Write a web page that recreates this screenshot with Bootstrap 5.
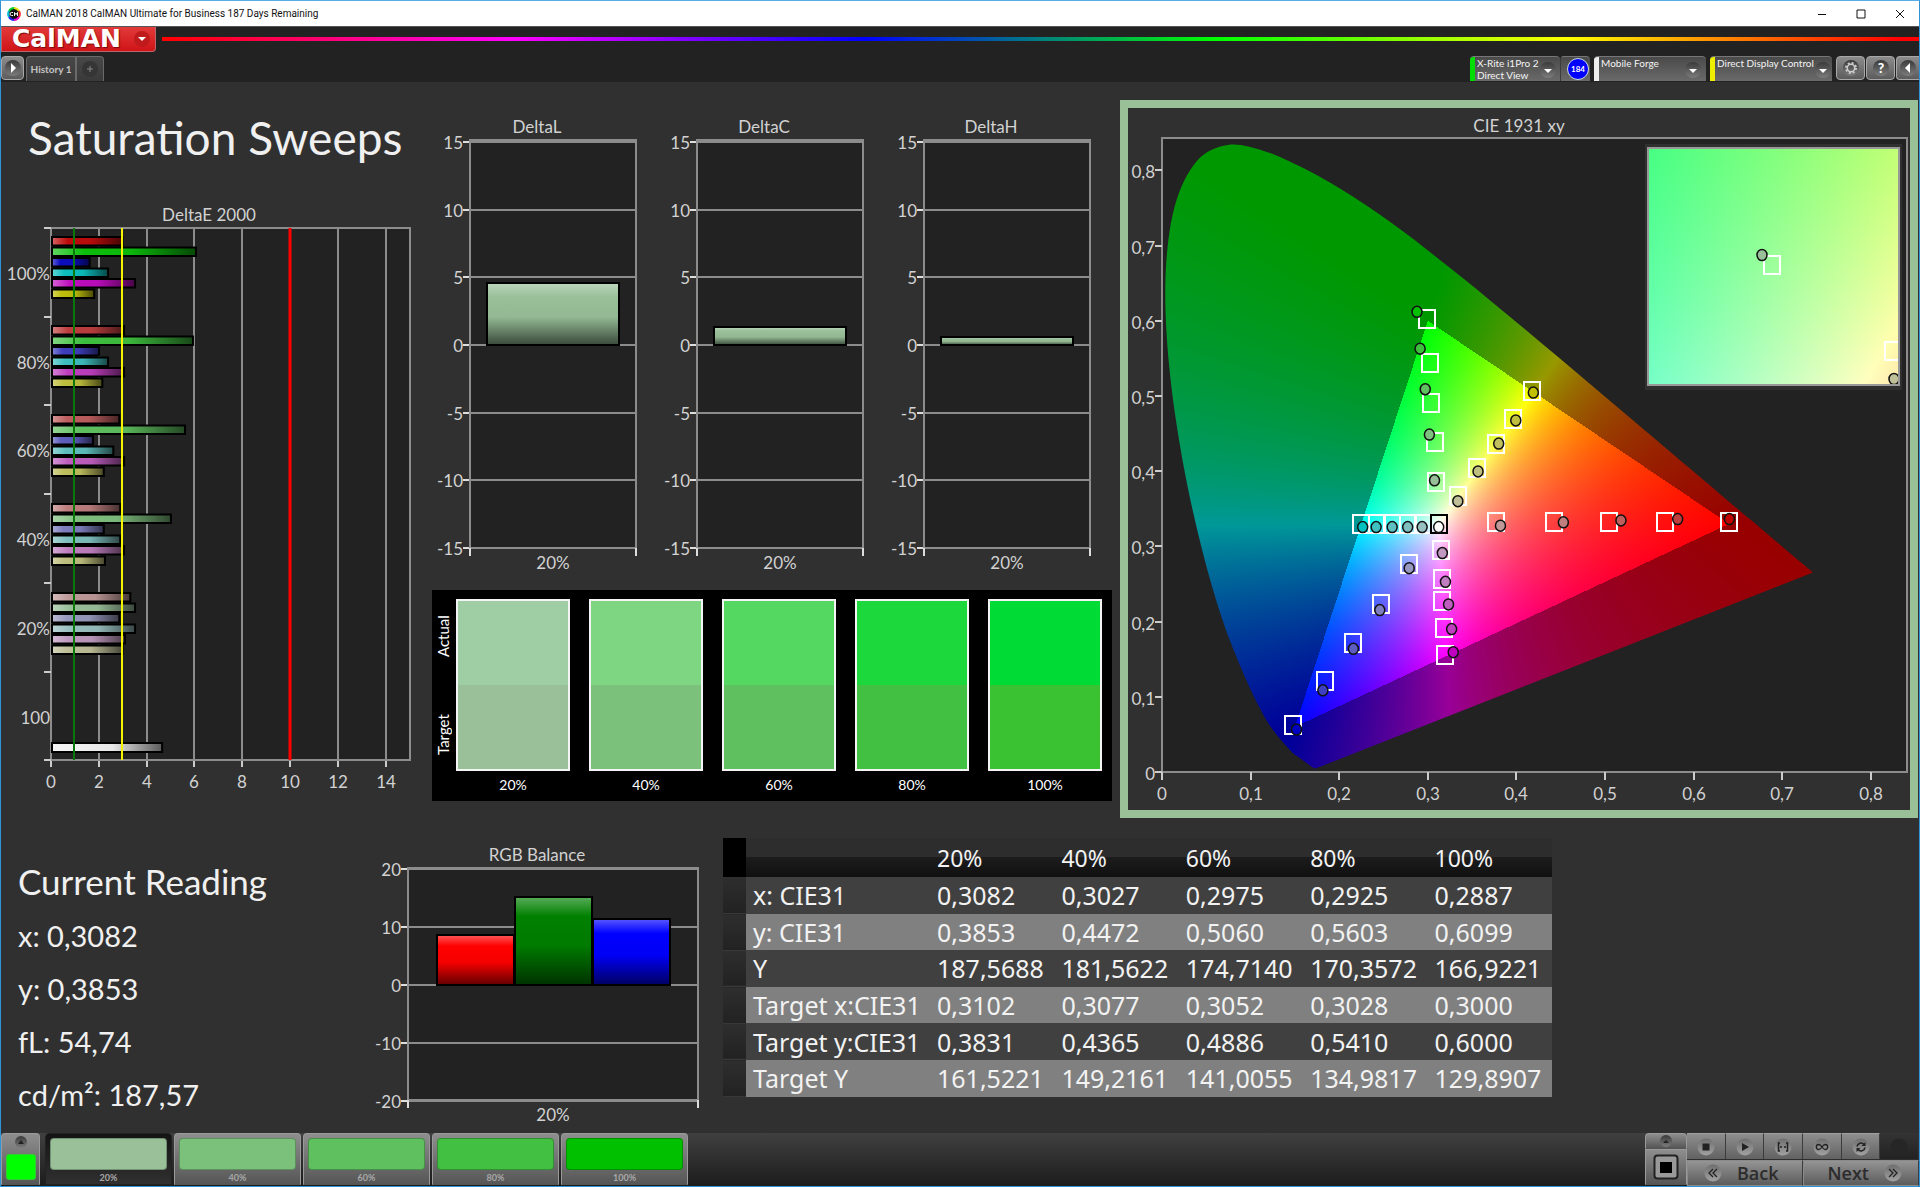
<!DOCTYPE html>
<html lang="en">
<head>
<meta charset="utf-8">
<meta name="viewport" content="width=device-width, initial-scale=1">
<title>CalMAN 2018 CalMAN Ultimate for Business 187 Days Remaining</title>
<link href="https://cdn.jsdelivr.net/npm/bootstrap@5.3.0/dist/css/bootstrap.min.css" rel="stylesheet">
<style>
  body { background: #303030; color: #eee; font-family: Lato, "Open Sans", sans-serif; border: 1px solid #2f93d8; border-top-color: #55aee8; }
  button { border: 0; padding: 0; color: inherit; background: none; }
  .title-bar { height: 25px; background: #fff; color: #111; font: 10px/25px Roboto, sans-serif; }
  .app-ico { margin: 0 5px 0 6px; }
  .win-btn { width: 39px; height: 18px; color: #111; line-height: 0; }
  .app-head { background: #222; height: 56px; border-top: 1px solid #555; }
  .brand-btn { width: 155px; height: 25px; padding-left: 10px; background: linear-gradient(#e23a3a, #d01417); border: 1px solid #b9676a; border-top: 0; border-radius: 0 0 4px 0; font: bold 25px/24px "DejaVu Sans", sans-serif; color: #fff; }
  .brand-word { text-shadow: 1px 1px 1px #7a0b0b; }
  .rainbow { height: 4px; margin-top: 10px; margin-left: 6px; background: linear-gradient(90deg, #f00, #f0f 20%, #00f 40%, #0f0 60%, #ff0 80%, #f00 99%); }
  .tab-dark { height: 25px; background: linear-gradient(#484848, #3a3a3a); border: 1px solid #6a6a6a; border-bottom: 0; font: bold 10px/24px Lato, sans-serif; color: #c4c4c4; }
  .tab-name { width: 50px; margin-left: 2px; border-radius: 4px 0 0 0; }
  .tab-add { width: 28px; line-height: 0; border-radius: 0 4px 0 0; }
  .tool-set { gap: 1px; margin-left: 4px; }
  .tool-btn { width: 29px; height: 24px; background: linear-gradient(#8c8c8c, #5c5c5c); border: 1px solid #a8a8a8; border-radius: 4px; line-height: 0; }
  .tool-edge { width: 23px; }
  .src-tab { height: 25px; background: linear-gradient(#4a4a4a, #6a6a6a); border-top: 1px solid #777; border-radius: 4px 4px 0 0; font: 10px/12px Lato, sans-serif; color: #f4f4f4; text-align: left; overflow: hidden; white-space: nowrap; }
  .src-flag { flex: 0 0 5px; align-self: stretch; margin-right: 2px; }
  .src-div { width: 30px; border-left: 1px solid #3c3c3c; padding-left: 5px; }
  .h-page { font-size: 46px; line-height: 56px; font-weight: 400; margin: 28px 0 0 27px; color: #f0f0f0; }
  .col-side { flex: 0 1 431px; min-width: 0; }
  .col-mid { flex: 0 1 681px; min-width: 0; padding-top: 18px; }
  .col-cie { flex: 1 1 0; min-width: 0; padding: 18px 1px 0 7px; }
  svg text { font-family: Lato, sans-serif; font-size: 17px; fill: #d2d2d2; }
  .cie-panel { border: 8px solid #99c097; }
  .delta-plot { flex: 1 1 0; min-width: 0; }
  .swatches { background: #000; color: #fff; font-size: 14px; line-height: 20px; margin: 10px 1px 0 0; padding: 9px 10px 6px 4px; }
  .v-label { writing-mode: vertical-rl; transform: rotate(180deg); font-size: 15px; width: 20px; height: 172px; padding: 16px 0; line-height: 14px; align-items: flex-start; }
  .pairs { gap: 19px; }
  .sw-col { flex: 1 1 0; min-width: 0; }
  .sw-pair { height: 172px; border: 2px solid #f4f4f4; margin-bottom: 4px; }
  .sw-pair i { flex: 1; }
  .readings { flex: 0 1 371px; padding: 16px 0 0 17px; font-size: 29px; line-height: 53px; color: #f0f0f0; }
  .readings h2 { font-size: 35px; line-height: 54px; font-weight: 400; margin: 0 0 1px; }
  .readings p { margin: 0; }
  .rgb-chart { flex: 0 1 351px; min-width: 0; }
  .data-grid { width: 829px; height: 259px; table-layout: fixed; font: 25px/32px "Noto Sans", sans-serif; color: #f2f2f2; }
  .data-grid th { font-weight: 400; }
  .data-grid th, .data-grid td { padding: 0 0 0 7px; white-space: nowrap; }
  .data-grid thead th { height: 39px; background: linear-gradient(#2d2d2d 50%, #1c1c1c 50%, #101010); font-size: 23px; }
  .data-grid thead th:first-child { background: #000; }
  .data-grid tbody tr { background: #404040; }
  .data-grid tbody tr:nth-child(even) { background: #808080; }
  .data-grid tbody td:first-child { background: linear-gradient(#2e2e2e, #222); border-bottom: 1px solid #383838; }
  .foot { height: 53px; background: linear-gradient(#404040, #1c1c1c); }
  .grey-btn { background: linear-gradient(#8e8e8e, #565656); border: 1px solid #9a9a9a; border-bottom-color: #555; border-radius: 4px 4px 0 0; }
  .pat-now { width: 39px; height: 52px; margin-right: 5px; }
  .pat-now i { width: 30px; height: 26px; background: #0f0; border: 1px solid #3c3; border-radius: 3px; }
  .levels { gap: 2px; }
  .level { width: 127px; height: 52px; padding: 4px; font: bold 9px/16px Lato, sans-serif; color: #a8a8a8; }
  .level i { height: 32px; border: 1px solid rgba(0,0,0,.25); border-radius: 4px; }
  .level.is-on { background: linear-gradient(#141414, #303030); border-color: #222; }
  .win-col { width: 42px; line-height: 0; }
  .transport { width: 232px; }
  .t-btn { flex: 1; height: 26px; line-height: 0; background: linear-gradient(#8e8e8e, #626262); border-right: 1px solid #3c3c3c; border-top: 1px solid #a0a0a0; }
  .t-btn.is-off { background: linear-gradient(#333, #222); border-color: #333; }
  .nav-btn { flex: 1; height: 26px; gap: 15px; background: linear-gradient(#949494, #5c5c5c); border: 1px solid #8a8a8a; border-right-color: #3c3c3c; font: 600 18px/24px "Open Sans", sans-serif; color: #2c2c2c; }
</style>
<script src="https://cdn.jsdelivr.net/npm/bootstrap@5.3.0/dist/js/bootstrap.bundle.min.js"></script>
</head>
<body class="min-vh-100 d-flex flex-column">

<svg width="0" height="0" class="position-absolute" aria-hidden="true">
  <defs>
    <linearGradient id="dip" x1="0" y1="0" x2="0" y2="1"><stop offset="0" stop-color="#3a3a3a"/><stop offset="1" stop-color="#7c7c7c"/></linearGradient>
    <linearGradient id="bump" x1="0" y1="0" x2="0" y2="1"><stop offset="0" stop-color="#6e6e6e"/><stop offset="1" stop-color="#a2a2a2"/></linearGradient>
    <symbol id="i-down" viewBox="0 0 18 18"><circle cx="9" cy="9" r="8" fill="url(#dip)"/><path d="M5 8h8l-4 4z" fill="#fff"/></symbol>
  </defs>
</svg>

<header>
  <div class="title-bar d-flex align-items-center">
    <svg class="app-ico" width="14" height="14" viewBox="0 0 14 14" aria-hidden="true">
      <circle cx="7" cy="7" r="6" fill="#111"/>
      <g fill="none" stroke-width="2"><path d="M7 1a6 6 0 0 1 5 3" stroke="#e4e020"/><path d="M12 4a6 6 0 0 1 0 6" stroke="#f33"/><path d="M12 10a6 6 0 0 1-5 3" stroke="#e0c"/><path d="M7 13a6 6 0 0 1-5-3" stroke="#22f"/><path d="M2 10a6 6 0 0 1 0-6" stroke="#0bd"/><path d="M2 4a6 6 0 0 1 5-3" stroke="#0c3"/></g>
      <path d="M6 5.500H4.500a1.500 1.500 0 0 0 0 3H6M7.500 9V5.500l1.500 2 1.500-2V9" fill="none" stroke="#fff"/>
    </svg>
    <span>CalMAN 2018 CalMAN Ultimate for Business 187 Days Remaining</span>
    <div class="ms-auto d-flex">
      <button class="win-btn" aria-label="Minimize"><svg width="10" height="10"><path d="M1 5.500h8" stroke="#111"/></svg></button>
      <button class="win-btn" aria-label="Maximize"><svg width="10" height="10"><path d="M1 1h8v8h-8z" fill="none" stroke="#111"/></svg></button>
      <button class="win-btn" aria-label="Close"><svg width="10" height="10"><path d="M1 1l8 8M9 1l-8 8" stroke="#111"/></svg></button>
    </div>
  </div>
  <div class="app-head">
    <div class="d-flex">
      <button class="brand-btn d-flex align-items-center"><span class="brand-word">CalMAN</span>
        <svg class="ms-auto me-1" width="18" height="18" viewBox="0 0 18 18" aria-hidden="true"><circle cx="9" cy="9" r="8" fill="#c01a1d"/><path d="M5 7h8l-4 4z" fill="#fff"/></svg></button>
      <div class="rainbow flex-grow-1"></div>
    </div>
    <div class="d-flex mt-1">
      <button class="tool-btn tool-edge" aria-label="Expand"><svg width="20" height="20" viewBox="0 0 20 20"><circle cx="10" cy="10" r="8" fill="url(#dip)"/><path d="M8 5l5 5-5 5z" fill="#fff"/></svg></button>
      <button class="tab-dark tab-name">History 1</button>
      <button class="tab-dark tab-add" aria-label="Add tab"><svg width="18" height="18" viewBox="0 0 18 18"><circle cx="9" cy="9" r="8" fill="#353535"/><path d="M9 6v6M6 9h6" stroke="#888"/></svg></button>
      <div class="ms-auto d-flex">
        <button class="src-tab d-flex" style="width:90px"><span class="src-flag" style="background:#0d0"></span><span>X-Rite i1Pro 2<br>Direct View</span><svg class="ms-auto me-1 mt-1 flex-shrink-0" width="18" height="18"><use href="#i-down"/></svg></button>
        <button class="src-tab src-div" aria-label="Readings 184"><svg width="24" height="24" viewBox="0 0 24 24"><circle cx="12" cy="12" r="10.500" fill="#00f" stroke="#cdd"/><text x="12" y="15" text-anchor="middle" style="font-size:8px;font-weight:700;fill:#fff">184</text></svg></button>
        <button class="src-tab d-flex mx-1" style="width:112px"><span class="src-flag" style="background:#eee"></span><span>Mobile Forge</span><svg class="ms-auto me-1 mt-1 flex-shrink-0" width="18" height="18"><use href="#i-down"/></svg></button>
        <button class="src-tab d-flex" style="width:122px"><span class="src-flag" style="background:#ee0"></span><span>Direct Display Control</span><svg class="ms-auto me-1 mt-1 flex-shrink-0" width="18" height="18"><use href="#i-down"/></svg></button>
        <div class="tool-set d-flex">
        <button class="tool-btn" aria-label="Settings"><svg width="20" height="20" viewBox="0 0 20 20"><circle cx="10" cy="10" r="8" fill="url(#dip)"/><circle cx="10" cy="10" r="5" fill="none" stroke="#ccc" stroke-width="2" stroke-dasharray="2 1.930"/><circle cx="10" cy="10" r="3.700" fill="none" stroke="#ccc" stroke-width="1.500"/></svg></button>
        <button class="tool-btn" aria-label="Help"><svg width="20" height="20" viewBox="0 0 20 20"><circle cx="10" cy="10" r="8" fill="url(#dip)"/><text x="10" y="15" text-anchor="middle" style="font-size:14px;font-weight:900;fill:#fff">?</text></svg></button>
        <button class="tool-btn tool-edge rounded-end-0 border-end-0" aria-label="Collapse"><svg width="20" height="20" viewBox="0 0 20 20"><circle cx="10" cy="10" r="8" fill="url(#dip)"/><path d="M12 5l-5 5 5 5z" fill="#fff"/></svg></button>
        </div>
      </div>
    </div>
  </div>
</header>

<main class="flex-grow-1">
  <div class="d-flex">
    <section class="col-side">
      <h1 class="h-page">Saturation Sweeps</h1>
      <svg id="deltaE" class="w-100 h-auto d-block" viewBox="0 0 431 604" style="margin-top:30px"></svg>
    </section>
    <section class="col-mid">
      <div class="d-flex" id="deltas"></div>
      <div class="swatches d-flex">
        <div class="v-label d-flex justify-content-between"><span>Target</span><span>Actual</span></div>
        <div class="pairs d-flex flex-grow-1" id="pairs"></div>
      </div>
    </section>
    <section class="col-cie">
      <div class="cie-panel"><svg id="cie" class="w-100 h-auto d-block" viewBox="0 0 782 702"></svg></div>
    </section>
  </div>
  <div class="d-flex" style="margin-top:20px">
    <section class="readings">
      <h2>Current Reading</h2>
      <p>x: 0,3082</p><p>y: 0,3853</p><p>fL: 54,74</p><p>cd/m²: 187,57</p>
    </section>
    <section class="rgb-chart"><svg id="rgb" class="w-100 h-auto d-block" viewBox="0 0 351 290"></svg></section>
    <section>
      <table class="data-grid">
        <colgroup><col style="width:23px"><col style="width:184px"><col><col><col><col><col></colgroup>
        <thead><tr><th></th><th></th><th>20%</th><th>40%</th><th>60%</th><th>80%</th><th>100%</th></tr></thead>
        <tbody>
          <tr><td></td><th>x: CIE31</th><td>0,3082</td><td>0,3027</td><td>0,2975</td><td>0,2925</td><td>0,2887</td></tr>
          <tr><td></td><th>y: CIE31</th><td>0,3853</td><td>0,4472</td><td>0,5060</td><td>0,5603</td><td>0,6099</td></tr>
          <tr><td></td><th>Y</th><td>187,5688</td><td>181,5622</td><td>174,7140</td><td>170,3572</td><td>166,9221</td></tr>
          <tr><td></td><th>Target x:CIE31</th><td>0,3102</td><td>0,3077</td><td>0,3052</td><td>0,3028</td><td>0,3000</td></tr>
          <tr><td></td><th>Target y:CIE31</th><td>0,3831</td><td>0,4365</td><td>0,4886</td><td>0,5410</td><td>0,6000</td></tr>
          <tr><td></td><th>Target Y</th><td>161,5221</td><td>149,2161</td><td>141,0055</td><td>134,9817</td><td>129,8907</td></tr>
        </tbody>
      </table>
    </section>
  </div>
</main>

<footer class="foot d-flex">
  <button class="grey-btn pat-now d-flex flex-column align-items-center justify-content-between pb-1" aria-label="Current pattern">
    <svg width="14" height="14" viewBox="0 0 14 14"><circle cx="7" cy="8" r="6" fill="url(#dip)"/><path d="M4 10l3-4 3 4z" fill="#222"/></svg><i class="d-block"></i></button>
  <div class="levels d-flex" id="levels"></div>
  <div class="ms-auto d-flex">
    <div class="win-col d-flex flex-column">
      <button class="grey-btn" style="height:16px" aria-label="More"><svg width="14" height="12" viewBox="0 0 14 12"><circle cx="7" cy="6" r="6" fill="url(#dip)"/><path d="M4 8l3-3 3 3z" fill="#222"/></svg></button>
      <button class="grey-btn rounded-0" style="height:36px" aria-label="Pattern window"><svg width="26" height="26" viewBox="0 0 26 26"><rect x="1.500" y="1.500" width="23" height="23" rx="3" fill="#999" stroke="#222" stroke-width="2"/><path d="M7 8h12v11H7z" fill="#000"/></svg></button>
    </div>
    <div class="transport">
      <div class="d-flex" style="margin-bottom:1px">
        <button class="t-btn" aria-label="Stop"><svg width="18" height="18" viewBox="0 0 18 18"><circle cx="9" cy="9" r="8.500" fill="url(#bump)"/><path d="M5.500 5.500h7v7h-7z" fill="#222"/></svg></button>
        <button class="t-btn" aria-label="Play"><svg width="18" height="18" viewBox="0 0 18 18"><circle cx="9" cy="9" r="8.500" fill="url(#bump)"/><path d="M6 5l7 4-7 4z" fill="#222"/></svg></button>
        <button class="t-btn" aria-label="Series"><svg width="18" height="18" viewBox="0 0 18 18"><circle cx="9" cy="9" r="8.500" fill="url(#bump)"/><path d="M6 5H4.500v8H6M12 5h1.500v8H12M6 9h2M10 9h2" fill="none" stroke="#222" stroke-width="1.500"/></svg></button>
        <button class="t-btn" aria-label="Continuous"><svg width="18" height="18" viewBox="0 0 18 18"><circle cx="9" cy="9" r="8.500" fill="url(#bump)"/><path d="M9 9c-1-1.500-2-2.500-3.200-2.500a2.500 2.500 0 0 0 0 5C7 11.500 8 10.500 9 9s2-2.500 3.200-2.500a2.500 2.500 0 0 1 0 5C11 11.500 10 10.500 9 9z" fill="none" stroke="#222" stroke-width="1.300"/></svg></button>
        <button class="t-btn" aria-label="Repeat"><svg width="18" height="18" viewBox="0 0 18 18"><circle cx="9" cy="9" r="8.500" fill="url(#bump)"/><path d="M5 8.500a4 4 0 0 1 7-2M13 9.500a4 4 0 0 1-7 2" fill="none" stroke="#222" stroke-width="1.600"/><path d="M13.500 4v4h-4zM4.500 14v-4h4z" fill="#222"/></svg></button>
        <button class="t-btn is-off" aria-label="Unused" disabled><svg width="18" height="18" viewBox="0 0 18 18"><circle cx="9" cy="9" r="8.500" fill="#262626"/></svg></button>
      </div>
      <div class="d-flex">
        <button class="nav-btn d-flex align-items-center justify-content-start ps-3"><svg width="18" height="18" viewBox="0 0 18 18" aria-hidden="true"><circle cx="9" cy="9" r="8.500" fill="url(#bump)"/><path d="M9 5L5 9l4 4M13 5L9 9l4 4" fill="none" stroke="#222" stroke-width="1.300"/></svg>Back</button>
        <button class="nav-btn d-flex align-items-center justify-content-end pe-3">Next<svg width="18" height="18" viewBox="0 0 18 18" aria-hidden="true"><circle cx="9" cy="9" r="8.500" fill="url(#bump)"/><path d="M5 5l4 4-4 4M9 5l4 4-4 4" fill="none" stroke="#222" stroke-width="1.300"/></svg></button>
      </div>
    </div>
  </div>
</footer>

<script>
const line = (x1, y1, x2, y2, c = '#8c8c8c', w = 2) => `<path d="M${x1} ${y1}L${x2} ${y2}" stroke="${c}" stroke-width="${w}"/>`;
const label = (x, y, s, a = 'middle') => `<text x="${x}" y="${y}" text-anchor="${a}">${s}</text>`;
const mix = (c, t, k) => `rgb(${c.map(v => Math.round(v + (t - v) * k)).join()})`;
let gid = 0;

/* Glossy bar with a black outline; vertical = light edge on top, otherwise on the left */
function bar(x, y, w, h, c, vertical) {
  const id = 'g' + gid++;
  return `<linearGradient id="${id}" x2="${vertical ? 0 : 1}" y2="${vertical ? 1 : 0}"><stop offset="0" stop-color="${mix(c, 255, .35)}"/><stop offset=".22" stop-color="${mix(c, 255, 0)}"/><stop offset=".55" stop-color="${mix(c, 0, .04)}"/><stop offset="1" stop-color="${mix(c, 0, .62)}"/></linearGradient>` +
    `<rect x="${x}" y="${y}" width="${w}" height="${h}" fill="url(#${id})" stroke="#000" stroke-width="2"/>`;
}

/* Column chart with a signed vertical axis */
function columns(o) {
  const [l, t, r, b] = o.box;
  let s = label(o.titleX, t - 7, o.title) + `<rect x="${l}" y="${t}" width="${r - l}" height="${b - t}" fill="#222"/>`;
  for (let v = -o.max; v <= o.max; v += o.step) {
    const y = Math.round(o.zero - v * o.unit);
    s += line(l, y, r, y) + line(l - 7, y, l, y, '#ddd') + label(l - 7, y + 7, v, 'end');
  }
  s += `<rect x="${l}" y="${t}" width="${r - l}" height="${b - t}" fill="none" stroke="#8c8c8c" stroke-width="2"/>`;
  s += line(l, b, l, b + 8, '#ddd') + line(r, b, r, b + 8, '#ddd') + label((l + r) / 2, b + 21, '20%');
  o.bars.forEach(([x, w, h, c]) => s += bar(x, o.zero - h, w, h, c, true));
  return s;
}

document.getElementById('deltas').innerHTML = [['DeltaL', 62], ['DeltaC', 18], ['DeltaH', 8]].map(([title, h]) =>
  `<svg viewBox="0 0 227 480" class="delta-plot h-auto d-block">` +
  columns({ title, titleX: 105, box: [38, 40, 204, 448], zero: 245, unit: 13.530, max: 15, step: 5, bars: [[55, 132, h, [153, 192, 153]]] }) + '</svg>').join('');

document.getElementById('rgb').innerHTML = columns({ title: 'RGB Balance', titleX: 165, box: [36, 30, 326, 262], zero: 147, unit: 5.800, max: 20, step: 10,
  bars: [[65, 77, 50, [255, 0, 0]], [143, 77, 88, [0, 128, 0]], [221, 77, 66, [0, 0, 255]]] });

/* DeltaE 2000: horizontal bars, six hues per saturation level */
(function () {
  const l = 50, t = 32, r = 409, b = 564, u = 23.900;
  const lens = [[3.03, 6.11, 1.66, 2.43, 3.56, 1.85], [3.1, 5.98, 2.05, 2.43, 3.1, 2.19], [2.9, 5.65, 1.8, 2.65, 3.1, 2.25], [2.94, 5.06, 2.25, 2.94, 3.1, 2.3], [3.36, 3.56, 2.9, 3.56, 3.14, 3.03]];
  const lows = [12, 62, 94, 126, 152], hues = [[1,0,0],[0,1,0],[0,0,1],[0,1,1],[1,0,1],[1,1,0]];
  let s = label(208, 25, 'DeltaE 2000') + `<rect x="${l}" y="${t}" width="${r - l}" height="${b - t}" fill="#222"/>`;
  for (let v = 0; v <= 14; v += 2) {
    const x = Math.round(l + v * u);
    s += line(x, t, x, b) + line(x, b, x, b + 7, '#ccc') + label(x, b + 28, v);
  }
  s += `<rect x="${l}" y="${t}" width="${r - l}" height="${b - t}" fill="none" stroke="#8c8c8c" stroke-width="2"/>`;
  ['100%', '80%', '60%', '40%', '20%', '100'].forEach((n, i) => s += label(l - 1, Math.round(t + 44 + i * 88.700) + 8, n, 'end'));
  for (let i = 0; i <= 6; i++) s += line(l - 7, Math.round(t + i * 88.700), l, Math.round(t + i * 88.700), '#ccc');
  lens.forEach((g, i) => g.forEach((v, k) => s += bar(l + 1, 41 + i * 89 + k * 10.500, v * u - 2, 8.500, hues[k].map(q => q ? 190 : lows[i]), false)));
  s += bar(l + 1, 547, 4.69 * u - 2, 9, [240, 240, 240], false);
  s += line(l + 23, t, l + 23, b, '#087808') + line(l + 71, t, l + 71, b, '#f4f400') + line(l + 239, t, l + 239, b, '#f00', 3);
  document.getElementById('deltaE').innerHTML = s;
})();

const levels = [['20%', '#a0cea4', '#99c099'], ['40%', '#7ed682', '#7bc07b'], ['60%', '#54d861', '#5fc05f'], ['80%', '#1cd83d', '#42c042'], ['100%', '#00dc35', '#3ac232']];
document.getElementById('pairs').innerHTML = levels.map(([n, a, t]) =>
  `<div class="sw-col text-center"><div class="sw-pair d-flex flex-column"><i style="background:${a}"></i><i style="background:${t}"></i></div><div>${n}</div></div>`).join('');
document.getElementById('levels').innerHTML = levels.map(([n, a, t], i) =>
  `<button class="grey-btn level${i ? '' : ' is-on'}"><i class="d-block" style="background:${i == 4 ? '#00c000' : t}"></i>${n}</button>`).join('');

/* CIE 1931 chromaticity diagram */
(function () {
  const l = 34, t = 30, r = 779, b = 664, ux = 886, uy = 752;
  const px = x => l + x * ux, py = y => b - y * uy;
  let s = label(391, 24, 'CIE 1931 xy') + `<rect x="${l}" y="${t}" width="${r - l}" height="${b - t}" fill="#222" stroke="#8c8c8c" stroke-width="2"/>`;
  for (let i = 0; i <= 8; i++) {
    const n = i ? '0,' + i : '0', x = Math.round(px(i / 10)), y = Math.round(py(i / 10));
    s += line(x, b, x, b + 8, '#ccc') + label(x, b + 28, n) + line(l - 7, y, l, y, '#ccc') + label(l - 7, y + 8, n, 'end');
  }
  s += `<foreignObject x="${l}" y="${t}" width="${r - l}" height="${b - t}"><canvas id="gamut" class="d-block" width="${r - l}" height="${b - t}"></canvas></foreignObject>`;
  s += '<rect x="517" y="36" width="257" height="246" fill="#303030"/><foreignObject x="520" y="40" width="251" height="237"><canvas id="inset" class="d-block" width="251" height="237"></canvas></foreignObject>';
  const sq = (x, y, c = '#fff') => `<rect x="${Math.round(x) - 8}" y="${Math.round(y) - 9}" width="16" height="18" fill="none" stroke="${c}" stroke-width="2"/>`;
  const dot = (x, y, f) => `<ellipse cx="${x}" cy="${y}" rx="5" ry="5.500" fill="${f}" stroke="#111" stroke-width="1.500"/>`;
  /* hue mask, then [target x, target y, measured x, measured y] for 20% to 100% */
  const sweeps = [
    [[1,0,0], [[.3765,.332,.382,.3276],[.443,.332,.453,.332],[.504,.332,.518,.3345],[.5675,.332,.582,.3364],[.64,.332,.6404,.3364]]],
    [[0,1,0], [[.3094,.3853,.3076,.3878],[.3077,.4387,.3018,.4487],[.3041,.4907,.2971,.509],[.3024,.5435,.2913,.5629],[.2989,.6024,.2878,.6119]]],
    [[0,0,1], [[.279,.2761,.279,.2711],[.2469,.2228,.2458,.2153],[.2154,.1713,.216,.1638],[.1839,.1205,.1816,.1086],[.1483,.0621,.1518,.0565]]],
    [[0,1,1], [[.2948,.3295,.2936,.3257],[.2779,.3295,.2773,.3257],[.2598,.3295,.2598,.3257],[.2423,.3295,.2417,.3257],[.2242,.3295,.2265,.3257]]],
    [[1,0,1], [[.3147,.295,.3164,.2912],[.3158,.2573,.3199,.2529],[.3158,.2272,.3234,.2228],[.3181,.192,.3269,.1901],[.3199,.1556,.3287,.1594]]],
    [[1,1,0], [[.3345,.3671,.3339,.3602],[.3555,.4041,.3567,.3997],[.3765,.4368,.38,.4368],[.3958,.47,.3993,.4675],[.418,.5071,.4191,.5046]]]];
  const lows = [152, 126, 94, 62, 0];
  sweeps.forEach(([h, p]) => p.forEach(q => s += sq(px(q[0]), py(q[1]))));
  s += sq(px(.3123), py(.33), '#000');
  sweeps.forEach(([h, p]) => p.forEach((q, i) => s += dot(px(q[2]), py(q[3]), `rgb(${h.map(v => v ? 192 : lows[i])})`)));
  s += dot(px(.3123), py(.3257), '#fff');
  s += '<clipPath id="win"><rect x="520" y="40" width="251" height="237"/></clipPath><g clip-path="url(#win)">' + sq(644, 157) + dot(634, 147, '#99c099') + sq(765, 243) + dot(766, 271, '#c0c098') + '</g>';
  s += '<rect x="520" y="40" width="251" height="237" fill="none" stroke="#999" stroke-width="2"/>';
  document.getElementById('cie').innerHTML = s;

  /* xy to display colour, scaled so the brightest channel is 1 */
  function colour(x, y) {
    const X = x / y, Z = (1 - x - y) / y;
    const c = [3.2406 * X - 1.5372 - .4986 * Z, -.9689 * X + 1.8758 + .0415 * Z, .0557 * X - .2040 + 1.0570 * Z];
    const inside = Math.min(...c) >= 0, q = c.map(v => Math.max(0, v)), m = Math.max(...q);
    return q.map(v => v / m * (inside ? 255 : 152));
  }
  function paint(id, fx, fy) {
    const cv = document.getElementById(id), g = cv.getContext('2d'), im = g.createImageData(cv.width, cv.height);
    for (let j = 0, k = 0; j < cv.height; j++) for (let i = 0; i < cv.width; i++, k += 4) {
      const c = colour(fx(i + .5), Math.max(.001, fy(j + .5)));
      im.data[k] = c[0]; im.data[k + 1] = c[1]; im.data[k + 2] = c[2]; im.data[k + 3] = 255;
    }
    g.putImageData(im, 0, 0);
    return g;
  }
  const g = paint('gamut', i => i / ux, j => (b - t - j) / uy);
  paint('inset', i => .2838 + i / 4650, j => .408 - j / 4720);

  /* keep only what lies inside the spectral locus */
  const P = [.1741,.005,.1714,.0051,.1689,.0069,.1644,.0109,.1566,.0177,.144,.0297,.1241,.0578,.1096,.0868,.0913,.1327,.0687,.2007,.0454,.295,.0235,.4127,.0082,.5384,.0039,.6548,.0139,.7502,.0389,.812,.0743,.8338,.1142,.8262,.1547,.8059,.1929,.7816,.2296,.7543,.2658,.7243,.3016,.6923,.3373,.6589,.3731,.6245,.4087,.5896,.4441,.5547,.4788,.5202,.5125,.4866,.5448,.4544,.5752,.4242,.6029,.3965,.627,.3725,.6658,.334,.6915,.3083,.719,.2809,.7347,.2653];
  const pt = i => { i = Math.min(Math.max(i, 0), P.length / 2 - 1); return [P[2 * i] * ux, b - t - P[2 * i + 1] * uy]; };
  g.globalCompositeOperation = 'destination-in';
  g.beginPath(); g.moveTo(...pt(0));
  for (let i = 0; i < P.length / 2 - 1; i++) {
    const a = pt(i - 1), c = pt(i), d = pt(i + 1), e = pt(i + 2);
    g.bezierCurveTo(c[0] + (d[0] - a[0]) / 6, c[1] + (d[1] - a[1]) / 6, d[0] - (e[0] - c[0]) / 6, d[1] - (e[1] - c[1]) / 6, d[0], d[1]);
  }
  g.closePath(); g.fill();
})();
</script>
</body>
</html>
